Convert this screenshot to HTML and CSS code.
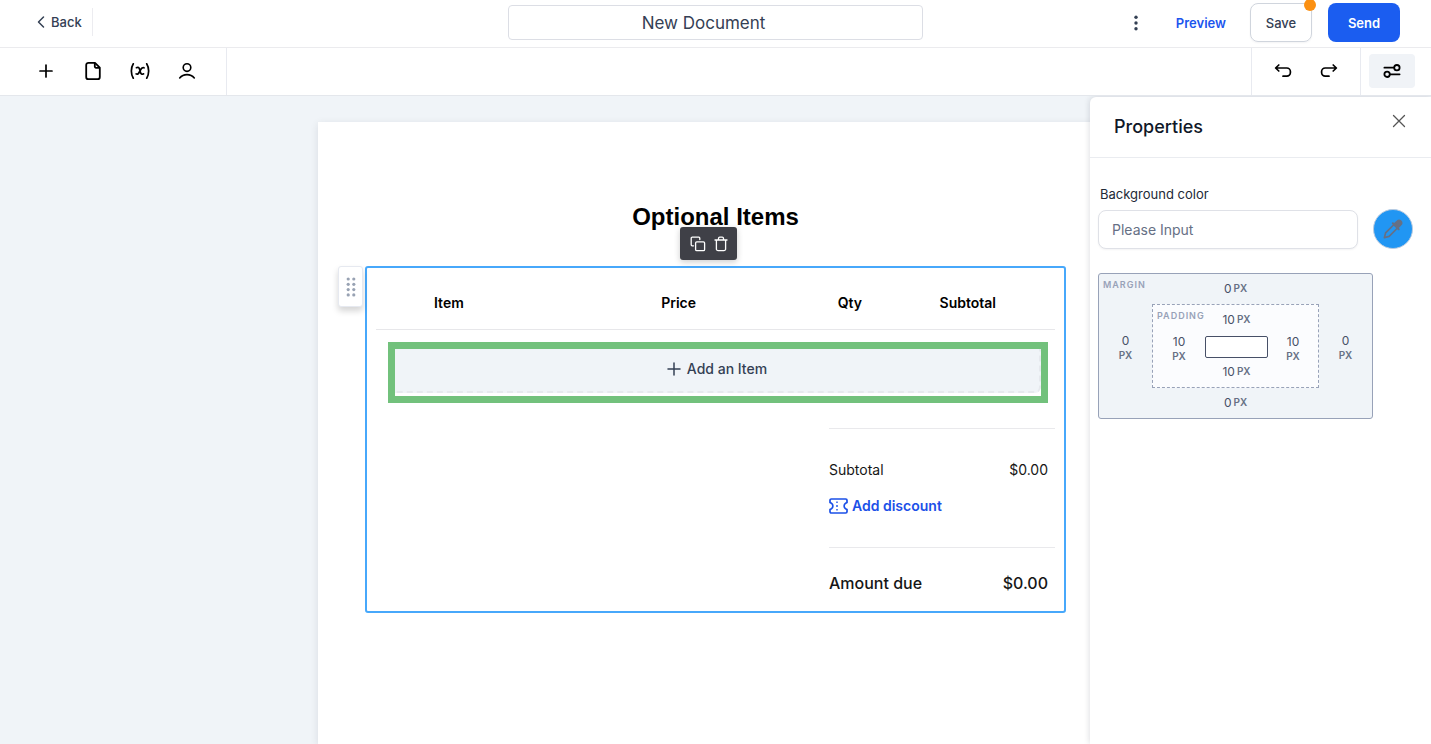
FILE: index.html
```html
<!DOCTYPE html>
<html lang="en">
<head>
<meta charset="utf-8">
<meta name="viewport" content="width=device-width, initial-scale=1">
<title>New Document</title>
<link rel="stylesheet" href="styles.css">
</head>
<body>
<div class="app">
  <header class="topbar">
    <div class="topbar-left">
      <a class="back" href="#">
        <svg width="8" height="14" viewBox="0 0 8 14" fill="none" stroke="currentColor" stroke-width="1.500" stroke-linecap="round" stroke-linejoin="round" aria-hidden="true"><path d="M6.500 2 1.500 7l5 5"/></svg>
        Back
      </a>
    </div>
    <input class="doc-title" type="text" value="New Document" aria-label="Document title">
    <div class="topbar-actions">
      <button class="more" type="button" aria-label="More options">
        <svg width="4" height="16" viewBox="0 0 4 16" fill="currentColor" aria-hidden="true"><circle cx="2" cy="2.200" r="1.700"/><circle cx="2" cy="8" r="1.700"/><circle cx="2" cy="13.800" r="1.700"/></svg>
      </button>
      <button class="preview" type="button">Preview</button>
      <button class="save" type="button">Save<span class="unsaved-dot"></span></button>
      <button class="send" type="button">Send</button>
    </div>
  </header>

  <div class="toolbar">
    <div class="tools tools-insert">
      <button class="tool" type="button" aria-label="Add block">
        <svg width="18" height="18" viewBox="0 0 18 18" fill="none" stroke="currentColor" stroke-width="1.700" stroke-linecap="round" aria-hidden="true"><path d="M9 3v12M3 9h12"/></svg>
      </button>
      <button class="tool" type="button" aria-label="Pages">
        <svg width="18" height="20" viewBox="0 0 18 20" fill="none" stroke="currentColor" stroke-width="1.800" stroke-linejoin="round" aria-hidden="true"><path d="M11 1.800H4.500A2.300 2.300 0 0 0 2.200 4.100v11.800a2.300 2.300 0 0 0 2.300 2.300h9a2.300 2.300 0 0 0 2.300-2.300V6.600z"/><path d="M10.800 2v3.600a1.200 1.200 0 0 0 1.200 1.200h3.600"/></svg>
      </button>
      <button class="tool" type="button" aria-label="Variables">
        <svg width="20" height="18" viewBox="0 0 20 18" fill="none" stroke="currentColor" stroke-width="1.700" stroke-linecap="round" aria-hidden="true"><path d="M3.300 1.800c-2.600 4.200-2.600 10.200 0 14.400M16.700 1.800c2.600 4.200 2.600 10.200 0 14.400"/><path d="M6.400 5.700c1.800-.9 2.800 0 3.200 1.600l.8 3c.5 1.900 1.500 2.400 3.200 1.500M14 5.800c-1.600-.8-2.600.3-3.800 2.700-1.300 2.700-2.400 4.500-4.100 3.400"/></svg>
      </button>
      <button class="tool" type="button" aria-label="Recipients">
        <svg width="18" height="18" viewBox="0 0 18 18" fill="none" stroke="currentColor" stroke-width="1.600" stroke-linecap="round" aria-hidden="true"><circle cx="9" cy="5.600" r="3.800"/><path d="M1.700 16c1.800-2.200 4.300-3.400 7.300-3.400s5.500 1.200 7.300 3.400"/></svg>
      </button>
    </div>
    <div class="tools tools-history">
      <button class="tool" type="button" aria-label="Undo">
        <svg width="18" height="16" viewBox="0 0 18 16" fill="none" stroke="currentColor" stroke-width="1.700" stroke-linecap="round" stroke-linejoin="round" aria-hidden="true"><path d="M4.800 2 1.600 5l3.200 3M1.800 5h11a3.600 3.600 0 0 1 3.600 3.600v1a3.600 3.600 0 0 1-3.600 3.600H9"/></svg>
      </button>
      <button class="tool" type="button" aria-label="Redo">
        <svg width="18" height="16" viewBox="0 0 18 16" fill="none" stroke="currentColor" stroke-width="1.700" stroke-linecap="round" stroke-linejoin="round" aria-hidden="true"><path d="M13.200 2l3.200 3-3.200 3M16.200 5h-11a3.600 3.600 0 0 0-3.600 3.600v1a3.600 3.600 0 0 0 3.600 3.600H9"/></svg>
      </button>
    </div>
    <div class="tools tools-panel">
      <button class="tool tool-active" type="button" aria-label="Properties" aria-pressed="true">
        <svg width="18" height="16" viewBox="0 0 18 16" fill="none" stroke="currentColor" stroke-width="1.800" stroke-linecap="round" aria-hidden="true"><path d="M1.400 4.700H11M7 11.300h9.600"/><circle cx="13.900" cy="4.700" r="2.700"/><circle cx="4.100" cy="11.300" r="2.700"/></svg>
      </button>
    </div>
  </div>

  <div class="workspace">
    <main class="paper">
      <h1 class="section-title">Optional Items</h1>
      <section class="block" aria-label="Pricing table">
        <button class="drag-handle" type="button" aria-label="Move block">
          <svg width="10" height="20" viewBox="0 0 10 20" fill="currentColor" aria-hidden="true"><circle cx="2.200" cy="2" r="1.600"/><circle cx="7.800" cy="2" r="1.600"/><circle cx="2.200" cy="7.300" r="1.600"/><circle cx="7.800" cy="7.300" r="1.600"/><circle cx="2.200" cy="12.600" r="1.600"/><circle cx="7.800" cy="12.600" r="1.600"/><circle cx="2.200" cy="17.900" r="1.600"/><circle cx="7.800" cy="17.900" r="1.600"/></svg>
        </button>
        <div class="block-menu">
          <button type="button" aria-label="Duplicate">
            <svg width="16" height="16" viewBox="0 0 16 16" fill="none" stroke="currentColor" stroke-width="1.300" stroke-linecap="round" stroke-linejoin="round" aria-hidden="true"><rect x="5.600" y="5.800" width="9" height="8.800" rx="1.200"/><path d="M3.500 9.800H2.200a1 1 0 0 1-1-1V2.200a1 1 0 0 1 1-1h6.600a1 1 0 0 1 1 1v1.300"/></svg>
          </button>
          <button type="button" aria-label="Delete">
            <svg width="14" height="16" viewBox="0 0 14 16" fill="none" stroke="currentColor" stroke-width="1.300" stroke-linecap="round" stroke-linejoin="round" aria-hidden="true"><path d="M1 4h12M4.500 3.800V2.500a1.300 1.300 0 0 1 1.300-1.300h2.400a1.300 1.300 0 0 1 1.300 1.300v1.300M2.400 4.200v8.700a1.700 1.700 0 0 0 1.700 1.700h5.800a1.700 1.700 0 0 0 1.700-1.700V4.200"/></svg>
          </button>
        </div>
        <table class="items">
          <thead>
            <tr><th scope="col" class="col-item">Item</th><th scope="col" class="col-price">Price</th><th scope="col" class="col-qty">Qty</th><th scope="col">Subtotal</th></tr>
          </thead>
        </table>
        <div class="highlight">
          <button class="add-item" type="button">
            <svg width="14" height="14" viewBox="0 0 14 14" fill="none" stroke="currentColor" stroke-width="1.500" stroke-linecap="round" aria-hidden="true"><path d="M7 1v12M1 7h12"/></svg>
            Add an Item
          </button>
        </div>
        <div class="totals">
          <div class="totals-group">
            <div class="total-row"><span>Subtotal</span><span>$0.00</span></div>
            <button class="add-discount" type="button">
              <svg width="19" height="16" viewBox="0 0 19 16" fill="none" stroke="currentColor" stroke-width="1.700" stroke-linejoin="round" aria-hidden="true"><path d="M2.300 1h14.400a1.300 1.300 0 0 1 1.300 1.300v2.200l-1.400.8a3.200 3.200 0 0 0 0 5.400l1.400.8v2.200a1.300 1.300 0 0 1-1.300 1.300H2.300A1.300 1.300 0 0 1 1 13.700v-2.200l1.400-.8a3.200 3.200 0 0 0 0-5.400L1 4.500V2.300A1.300 1.300 0 0 1 2.300 1z"/><path d="M8 3.500v1.600m0 1.900v2m0 1.900v1.600" stroke-width="1.400"/></svg>
              Add discount
            </button>
          </div>
          <div class="total-row total-due"><span>Amount due</span><span>$0.00</span></div>
        </div>
      </section>
    </main>

    <aside class="panel">
      <div class="panel-head">
        <h2>Properties</h2>
        <button class="close" type="button" aria-label="Close">
          <svg width="14" height="14" viewBox="0 0 14 14" fill="none" stroke="currentColor" stroke-width="1.300" stroke-linecap="round" aria-hidden="true"><path d="M1.500 1.500l11 11M12.500 1.500l-11 11"/></svg>
        </button>
      </div>
      <div class="panel-body">
        <label class="field-label" for="bg">Background color</label>
        <div class="color-row">
          <input class="color-input" id="bg" type="text" placeholder="Please Input">
          <button class="picker" type="button" aria-label="Pick a color">
            <svg width="20" height="20" viewBox="0 0 20 20" fill="none" stroke="currentColor" stroke-width="1.700" stroke-linejoin="round" aria-hidden="true"><path d="M11 5.500 2.600 13.900 1.400 18.600l4.700-1.200L14.500 9"/><path d="M9.800 4.300l5.900 5.900" stroke-width="2" stroke-linecap="round"/><path d="M11.200 5.200l3.200-3a2.400 2.400 0 0 1 3.400 3.400l-3 3.200z" fill="currentColor"/></svg>
          </button>
        </div>
        <div class="box-model">
          <span class="box-name">Margin</span>
          <span class="side top">0 <small>PX</small></span>
          <span class="side left">0 <small>PX</small></span>
          <div class="box-padding">
            <span class="box-name">Padding</span>
            <span class="side top">10 <small>PX</small></span>
            <span class="side left">10 <small>PX</small></span>
            <div class="box-core"></div>
            <span class="side right">10 <small>PX</small></span>
            <span class="side bottom">10 <small>PX</small></span>
          </div>
          <span class="side right">0 <small>PX</small></span>
          <span class="side bottom">0 <small>PX</small></span>
        </div>
      </div>
    </aside>
  </div>
</div>
</body>
</html>
```
FILE: styles.css
```css
*, *::before, *::after { box-sizing: border-box; }

body {
  margin: 0;
  font-family: Inter, "Liberation Sans", sans-serif;
  font-size: 14px;
  line-height: 20px;
  color: #111;
  background: #fff;
}

button, input { font: inherit; color: inherit; }
button { border: 0; padding: 0; background: none; cursor: pointer; }
svg { display: block; flex: none; }

.app { display: flex; flex-direction: column; height: 100vh; overflow: hidden; }

/* Top bar */
.topbar {
  display: grid;
  grid-template-columns: 1fr minmax(0, 415px) 1fr;
  align-items: center;
  height: 48px;
  flex: none;
  padding-bottom: 2px;
  border-bottom: 1px solid #ebebee;
  font-size: 13px;
}
.topbar-left { display: flex; padding: 0 0 2px 37px; }
.back {
  display: flex;
  align-items: center;
  gap: 6px;
  height: 28px;
  padding-right: 10px;
  border-right: 1px solid #ececf0;
  color: #344054;
  font-weight: 500;
  text-decoration: none;
}
.doc-title {
  width: 100%;
  height: 35px;
  padding: 0 24px 0 0;
  border: 1px solid #dcdee5;
  border-radius: 4px;
  background: #fff;
  color: #344054;
  font-size: 17px;
  text-align: center;
}
.topbar-actions {
  display: flex;
  justify-content: flex-end;
  align-items: center;
  gap: 16px;
  padding-right: 31px;
  font-weight: 600;
}
.more { padding: 0 8px; color: #344054; }
.preview { padding: 0 8px; margin-left: 6px; color: #1b55ee; }
.save, .send { height: 39px; border-radius: 8px; }
.save {
  position: relative;
  width: 62px;
  border: 1px solid #d0d5dd;
  color: #344054;
  font-weight: 500;
  box-shadow: 0 1px 2px #1018280d;
}
.unsaved-dot {
  position: absolute;
  top: -5px;
  right: -5px;
  width: 12px;
  height: 12px;
  border-radius: 50%;
  background: #fb9012;
}
.send { width: 72px; background: #1b5df0; color: #fff; }

/* Toolbar */
.toolbar {
  display: flex;
  flex: none;
  height: 48px;
  border-bottom: 1px solid #e4e7ec;
}
.tools { display: flex; align-items: center; padding-bottom: 1px; color: #000; }
.tool {
  display: flex;
  align-items: center;
  justify-content: center;
  width: 46px;
  height: 34px;
  border-radius: 4px;
}
.tools-insert { gap: 1px; padding-left: 23px; padding-right: 16px; border-right: 1px solid #e8eaf0; }
.tools-history { margin-left: auto; padding-left: 8px; padding-right: 8px; border-left: 1px solid #e8eaf0; }
.tools-panel { padding-left: 8px; padding-right: 16px; border-left: 1px solid #e8eaf0; }
.tool-active { background: #f0f3f7; }

/* Workspace */
.workspace {
  position: relative;
  display: flex;
  justify-content: center;
  flex: 1;
  min-height: 0;
  background: #f0f4f8;
  overflow: hidden;
}
.paper {
  width: 795px;
  margin-top: 26px;
  padding: 80px 47px 0;
  background: #fff;
  box-shadow: 0 2px 8px #1018281a;
}
.section-title {
  margin: 0 0 34px;
  color: #000;
  font-family: "Liberation Sans", Arial, sans-serif;
  font-size: 24px;
  line-height: 30px;
  text-align: center;
}

/* Selected pricing block */
.block {
  position: relative;
  padding: 9px 9px 16px;
  border: 2px solid #47a8fb;
  border-radius: 3px;
}
.drag-handle {
  position: absolute;
  top: -2px;
  left: -29px;
  display: flex;
  align-items: center;
  justify-content: center;
  width: 25px;
  height: 41px;
  border: 1px solid #e6e9f0;
  border-radius: 3px;
  background: #fff;
  color: #98a2b3;
  box-shadow: 0 4px 6px #0000002b;
}
.block-menu {
  position: absolute;
  bottom: 100%;
  left: 313px;
  display: flex;
  align-items: center;
  justify-content: center;
  gap: 8px;
  width: 57px;
  height: 33px;
  margin-bottom: 8px;
  border-radius: 3px;
  background: #3f4047;
  color: #fff;
  box-shadow: 0 2px 6px #00000033;
}
.items {
  width: 100%;
  border-collapse: collapse;
  table-layout: fixed;
  border-bottom: 1px solid #e7e7ea;
}
.items th {
  height: 52px;
  padding: 0;
  color: #000;
  font-weight: 600;
  text-align: left;
}
.items .col-item { width: 42%; padding-left: 58px; }
.items .col-price { width: 26%; }
.items .col-qty { width: 15%; }

.highlight {
  margin: 12px 7px 0 12px;
  padding-bottom: 3px;
  border: 7px solid #72c17c;
}
.add-item {
  display: flex;
  align-items: center;
  justify-content: center;
  gap: 6px;
  width: 100%;
  height: 44px;
  padding-bottom: 2px;
  border: 2px dashed #e6e9ee;
  border-top: 0;
  border-left: 0;
  border-radius: 0 0 6px 0;
  background: #f0f4f8;
  color: #344054;
  font-weight: 500;
}

.totals { width: 226px; margin: 25px 0 0 auto; }
.totals-group {
  display: grid;
  gap: 16px;
  padding: 31px 0;
  border: 1px solid #e9e9ec;
  border-width: 1px 0;
}
.total-row {
  display: flex;
  justify-content: space-between;
  padding-right: 7px;
  color: #161616;
}
.add-discount {
  display: flex;
  align-items: center;
  gap: 4px;
  color: #1b50e8;
  font-weight: 600;
}
.total-due { margin-top: 23px; font-size: 16px; line-height: 24px; font-weight: 500; }

/* Properties panel */
.panel {
  position: absolute;
  top: 1px;
  right: 0;
  bottom: 0;
  width: 341px;
  border-radius: 6px 0 0 0;
  background: #fff;
  box-shadow: 0 0 6px #1018282b;
}
.panel-head {
  display: flex;
  align-items: center;
  justify-content: space-between;
  height: 61px;
  padding: 0 25px 0 24px;
  border-bottom: 1px solid #eaecf0;
}
.panel-head h2 { margin: 0; font-size: 18px; line-height: 28px; font-weight: 500; color: #101828; }
.close { align-self: flex-start; margin-top: 17px; color: #555; }
.panel-body { padding: 26px 18px 0 8px; }
.field-label { display: block; padding-left: 2px; color: #222936; font-size: 13px; }
.color-row { display: flex; align-items: center; gap: 15px; margin-top: 5px; }
.color-input {
  flex: 1;
  min-width: 0;
  height: 39px;
  padding: 0 13px;
  border: 1px solid #dfe1e7;
  border-radius: 8px;
  background: #fff;
  box-shadow: 0 1px 2px #1018280d;
}
.color-input::placeholder { color: #667085; opacity: 1; }
.picker {
  display: flex;
  align-items: center;
  justify-content: center;
  width: 40px;
  height: 40px;
  border: 1px solid #b9cbe0;
  border-radius: 50%;
  background: #2196f3;
  color: #667085;
}

/* Margin and padding editor */
.box-model {
  position: relative;
  display: grid;
  grid-template: 30px 84px 30px / 53px 167px 53px;
  width: 275px;
  margin-top: 24px;
  border: 1px solid #98a2b8;
  border-radius: 3px;
  background: #f0f4f8;
  color: #475067;
  font-size: 12px;
  line-height: 15px;
}
.box-padding {
  position: relative;
  grid-area: 2 / 2;
  display: grid;
  grid-template: 31px 22px 29px / 52px 63px 50px;
  border: 1px dashed #98a2b8;
  background: #fbfcfe;
}
.box-name {
  position: absolute;
  top: 3px;
  left: 4px;
  color: #98a2b8;
  font-size: 9px;
  font-weight: 600;
  letter-spacing: 1px;
  text-transform: uppercase;
}
.box-core { grid-area: 2 / 2; border: 1px solid #475067; border-radius: 2px; background: #fff; }
.side { display: flex; align-items: center; justify-content: center; gap: 2px; }
.side small { color: #667085; font-size: 10px; font-weight: 600; }
.top { grid-area: 1 / 2; }
.left { grid-area: 2 / 1; }
.right { grid-area: 2 / 3; }
.bottom { grid-area: 3 / 2; }
.top, .bottom { padding-bottom: 2px; }
.left, .right { flex-direction: column; gap: 0; align-self: center; padding-top: 3px; }
```
